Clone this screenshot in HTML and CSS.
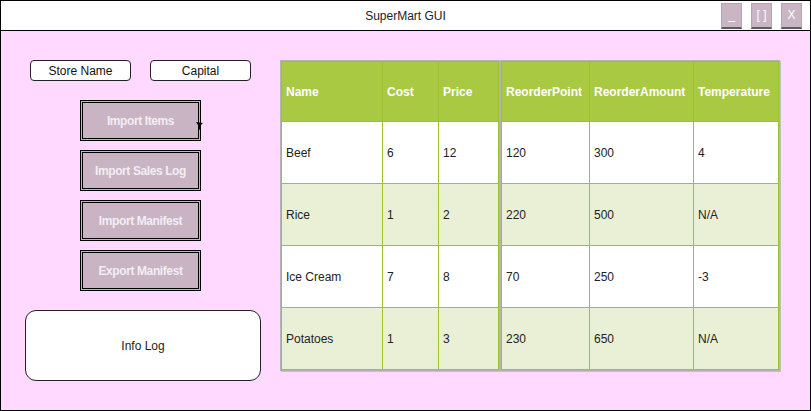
FILE: index.html
```html
<!DOCTYPE html>
<html>
<head>
<meta charset="utf-8">
<link rel="stylesheet" href="styles.css">
</head>
<body>
<div class="window">
  <div class="titlebar">
    <div></div>
    <div class="title">SuperMart GUI</div>
    <div class="winbtns">
      <div class="winbtn">_</div>
      <div class="winbtn">[ ]</div>
      <div class="winbtn">X</div>
    </div>
  </div>
  <div class="main">
    <div class="side">
      <div class="fields">
        <div class="field">Store Name</div>
        <div class="field">Capital</div>
      </div>
      <div class="buttons">
        <div class="btn">Import Items
          <svg class="cursor" width="8" height="9" viewBox="0 0 8 9"><path d="M0 0 L7 1 L5 3 L3.5 8.5 L2 3 Z" fill="#000"/></svg>
        </div>
        <div class="btn">Import Sales Log</div>
        <div class="btn">Import Manifest</div>
        <div class="btn">Export Manifest</div>
      </div>
      <div class="infolog">Info Log</div>
    </div>
    <div class="tables">
      <table class="grid left">
        <tr class="head"><th class="c-name">Name</th><th class="c-cost">Cost</th><th class="c-price">Price</th></tr>
        <tr><td>Beef</td><td>6</td><td>12</td></tr>
        <tr class="alt"><td>Rice</td><td>1</td><td>2</td></tr>
        <tr><td>Ice Cream</td><td>7</td><td>8</td></tr>
        <tr class="alt"><td>Potatoes</td><td>1</td><td>3</td></tr>
      </table>
      <table class="grid right">
        <tr class="head"><th class="c-rp">ReorderPoint</th><th class="c-ra">ReorderAmount</th><th class="c-temp">Temperature</th></tr>
        <tr><td>120</td><td>300</td><td>4</td></tr>
        <tr class="alt"><td>220</td><td>500</td><td>N/A</td></tr>
        <tr><td>70</td><td>250</td><td>-3</td></tr>
        <tr class="alt"><td>230</td><td>650</td><td>N/A</td></tr>
      </table>
    </div>
  </div>
</div>
</body>
</html>
```
FILE: styles.css
```css
* { box-sizing: border-box; }
html, body { margin: 0; padding: 0; }
body {
  font-family: "Liberation Sans", Arial, sans-serif;
  font-size: 12px;
  color: #222;
  background: #fff;
}
.window {
  width: 811px;
  height: 411px;
  border: 1px solid #000;
  background: #ffd9ff;
  display: flex;
  flex-direction: column;
}
.titlebar {
  height: 30px;
  background: #fff;
  border-bottom: 1px solid #000;
  display: grid;
  grid-template-columns: 1fr auto 1fr;
  align-items: center;
}
.title {
  font-size: 12px;
  color: #222;
  padding-top: 1px;
}
.winbtns {
  justify-self: end;
  display: flex;
  gap: 9px;
  margin-right: 8px;
  align-self: start;
  margin-top: 2px;
}
.winbtn {
  width: 21px;
  height: 26px;
  background: #c9b5c3;
  border: 1px solid #b7a4b2;
  border-bottom: 2px solid #5c5c5c;
  color: #fff;
  font-size: 12px;
  display: flex;
  align-items: center;
  justify-content: center;
  padding-bottom: 1px;
}
.main {
  flex: 1;
  display: flex;
  padding-top: 29px;
}
.side {
  width: 279px;
  display: flex;
  flex-direction: column;
  align-items: center;
}
.fields {
  display: flex;
  gap: 19px;
}
.field {
  width: 101px;
  height: 21px;
  background: #fff;
  border: 1px solid #222;
  border-radius: 4px;
  display: flex;
  align-items: center;
  justify-content: center;
  font-size: 12px;
  color: #111;
}
.buttons {
  display: flex;
  flex-direction: column;
  gap: 9px;
  margin-top: 19px;
}
.btn {
  position: relative;
  width: 121px;
  height: 41px;
  background: #c8b4c2;
  border: 3px double #000;
  color: #f3eef3;
  font-weight: bold;
  font-size: 12px;
  letter-spacing: -0.4px;
  display: flex;
  align-items: center;
  justify-content: center;
}
.cursor {
  position: absolute;
  left: 113px;
  top: 19px;
}
.infolog {
  width: 236px;
  height: 71px;
  margin-top: 19px;
  margin-left: 5px;
  background: #fff;
  border: 1px solid #222;
  border-radius: 11px;
  display: flex;
  align-items: center;
  justify-content: center;
  font-size: 12px;
  color: #222;
}
.tables {
  display: flex;
  align-self: flex-start;
  box-shadow: 1px 1px 0 #c0c0c0;
}
.grid {
  border-collapse: separate;
  border-spacing: 0;
  border: 1px solid #b4b4b4;
}
.grid th, .grid td {
  border-right: 1px solid #9cc32a;
  border-bottom: 1px solid #9cc32a;
  padding: 0 4px;
  text-align: left;
  vertical-align: middle;
  height: 62px;
  font-size: 12px;
}
.grid tr > :first-child { border-left: 1px solid #9cc32a; }
.grid tr:first-child > * { border-top: 1px solid #9cc32a; height: 61px; }
.grid th {
  background: #a9c943;
  color: #fff;
  font-weight: bold;
}
.grid td { background: #fff; color: #222; }
.grid tr.alt td { background: #eaf0d6; }
.c-name { width: 102px; }
.c-cost { width: 56px; }
.c-price { width: 60px; }
.c-rp { width: 89px; }
.c-ra { width: 104px; }
.c-temp { width: 85px; }
```
